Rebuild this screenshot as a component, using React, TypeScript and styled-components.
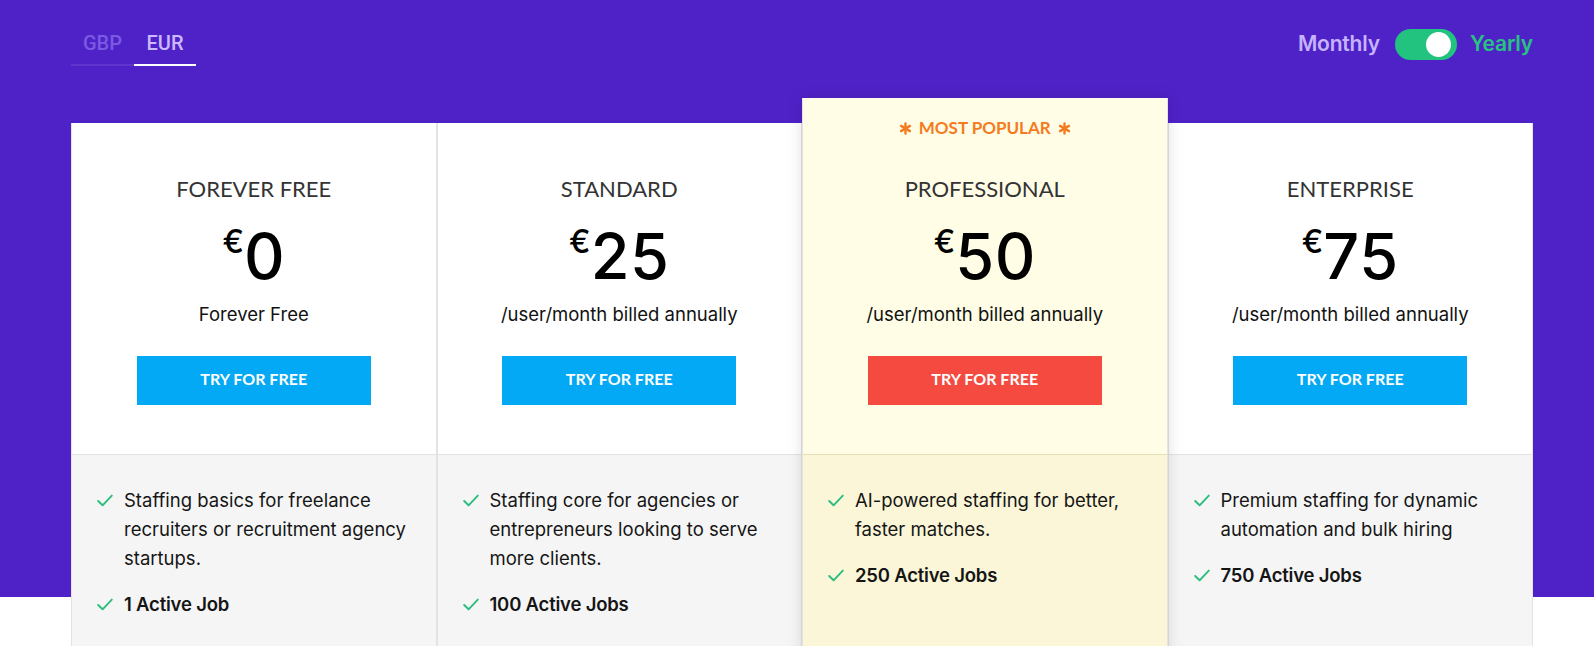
import React from 'react';
import styled, { createGlobalStyle } from 'styled-components';

const GlobalStyle = createGlobalStyle`
    html, body {
        margin: 0;
        padding: 0;
        overflow: hidden;
    }

    body {
        background: #fff;
        font-family: Inter, 'Liberation Sans', sans-serif;
    }

    * {
        box-sizing: border-box;
    }
`;

const Page = styled.div`
    background: linear-gradient(to bottom, #4f22c8 0, #4f22c8 597px, #fff 597px);
    height: 646px;
    overflow: hidden;
`;

const Container = styled.div`
    margin-left: 71px;
    width: 1462px;
`;

const Header = styled.div`
    align-items: flex-start;
    display: flex;
    height: 98px;
    justify-content: space-between;
    padding-top: 29px;
`;

const Tabs = styled.div`
    display: flex;
    margin-top: 2px;
`;

const Tab = styled.div<{ $active?: boolean }>`
    border-bottom: 2px solid ${props => (props.$active ? '#fff' : 'rgba(255, 255, 255, 0.09)')};
    color: ${props => (props.$active ? '#cdb9ff' : '#7a5ae2')};
    font-family: Roboto, 'Liberation Sans', sans-serif;
    font-size: 20px;
    font-weight: 500;
    line-height: 24px;
    padding-bottom: 9px;
    text-align: center;
    width: ${props => (props.$active ? '62px' : '63px')};
`;

const BillingSwitch = styled.div`
    align-items: center;
    display: flex;
    height: 31px;
`;

const BillingLabel = styled.span<{ $on?: boolean }>`
    color: ${props => (props.$on ? '#27c47f' : '#c6b3ff')};
    font-size: 21px;
    font-weight: 600;
    letter-spacing: -0.2px;
    line-height: 24px;
    margin-bottom: 1px;
`;

const Switch = styled.div`
    background: #22c27f;
    border-radius: 16px;
    display: flex;
    height: 31px;
    justify-content: flex-end;
    margin: 0 13px 0 15px;
    padding: 3px 6px 3px 0;
    width: 62px;
`;

const Knob = styled.div`
    background: #fff;
    border-radius: 50%;
    height: 25px;
    width: 25px;
`;

const Grid = styled.div`
    align-items: start;
    display: grid;
    grid-template-columns: repeat(4, 1fr);
`;

const Card = styled.div<{ $popular?: boolean }>`
    border-left: 1px solid #e3e3e3;
    border-right: 1px solid #e3e3e3;
    box-shadow: ${props => (props.$popular ? '0 0 14px rgba(0, 0, 0, 0.13)' : 'none')};
    margin-top: ${props => (props.$popular ? '0' : '25px')};
    position: relative;
    z-index: ${props => (props.$popular ? 1 : 0)};
`;

const Top = styled.div<{ $popular?: boolean }>`
    align-items: center;
    background: ${props => (props.$popular ? '#fffde6' : '#fff')};
    display: flex;
    flex-direction: column;
    height: ${props => (props.$popular ? '356px' : '331px')};
    padding-top: ${props => (props.$popular ? '20px' : '52px')};
`;

const Popular = styled.div`
    align-items: center;
    color: #f47b20;
    display: flex;
    font-family: Lato, 'Liberation Sans', sans-serif;
    font-size: 17px;
    font-weight: 700;
    gap: 7px;
    height: 20px;
    line-height: 20px;
    margin-bottom: 37px;
`;

const Star = styled.svg`
    display: block;
`;

const Title = styled.h3`
    color: #333;
    font-family: Lato, 'Liberation Sans', sans-serif;
    font-size: 22px;
    font-weight: 400;
    line-height: 26px;
    margin: 1px 0 0;
`;

const Price = styled.div`
    align-items: flex-start;
    color: #000;
    display: flex;
    height: 62px;
    margin-top: 23px;
`;

const Currency = styled.span`
    font-size: 32px;
    font-weight: 500;
    line-height: 30px;
    margin: 2px 0 0;
`;

const Amount = styled.span`
    font-size: 63px;
    font-weight: 500;
    letter-spacing: 0.5px;
    line-height: 62px;
`;

const Note = styled.p`
    color: #111;
    font-size: 18.5px;
    line-height: 22px;
    margin: 16px 0 0;
`;

const TryButton = styled.button<{ $popular?: boolean }>`
    background: ${props => (props.$popular ? '#f44a3f' : '#03a9f4')};
    border: 0;
    color: #fff;
    cursor: pointer;
    font-family: Lato, 'Liberation Sans', sans-serif;
    font-size: 16px;
    font-weight: 700;
    height: 49px;
    margin-top: 31px;
    padding: 0 0 5px;
    width: 234px;
`;

const Features = styled.ul<{ $popular?: boolean }>`
    background: ${props => (props.$popular ? '#faf6d7' : '#f5f5f5')};
    border-top: 1px solid ${props => (props.$popular ? '#e6e0b6' : '#e3e3e3')};
    list-style: none;
    margin: 0;
    min-height: 260px;
    padding: 31px 22px 0 25px;
`;

const Feature = styled.li<{ $strong?: boolean }>`
    color: #151515;
    display: flex;
    font-size: 18.5px;
    font-weight: ${props => (props.$strong ? 600 : 400)};
    letter-spacing: ${props => (props.$strong ? '-0.2px' : '0')};
    line-height: 29px;
    margin-bottom: 17px;
`;

const CheckBox = styled.span`
    align-items: center;
    display: flex;
    flex: 0 0 27px;
    height: 29px;
`;

const Check = () => (
    <svg width="16" height="13" viewBox="0 0 16 13" fill="none">
        <path d="M1.2 7 L5.6 11.3 L14.8 1.6" stroke="#2bbd7e" strokeWidth="1.9" strokeLinecap="round" strokeLinejoin="round" />
    </svg>
);

const Asterisk = () => (
    <Star width="13" height="13" viewBox="0 0 14 14">
        <g stroke="#f47b20" strokeWidth="2.6" strokeLinecap="round">
            <line x1="7" y1="1.5" x2="7" y2="12.5" />
            <line x1="2.2" y1="4.2" x2="11.8" y2="9.8" />
            <line x1="2.2" y1="9.8" x2="11.8" y2="4.2" />
        </g>
    </Star>
);

interface Plan {
    name: string;
    price: string;
    note: string;
    desc: string;
    jobs: string;
    popular?: boolean;
}

const PLANS: Plan[] = [
    {
        name: 'FOREVER FREE',
        price: '0',
        note: 'Forever Free',
        desc: 'Staffing basics for freelance recruiters or recruitment agency startups.',
        jobs: '1 Active Job',
    },
    {
        name: 'STANDARD',
        price: '25',
        note: '/user/month billed annually',
        desc: 'Staffing core for agencies or entrepreneurs looking to serve more clients.',
        jobs: '100 Active Jobs',
    },
    {
        name: 'PROFESSIONAL',
        price: '50',
        note: '/user/month billed annually',
        desc: 'AI-powered staffing for better, faster matches.',
        jobs: '250 Active Jobs',
        popular: true,
    },
    {
        name: 'ENTERPRISE',
        price: '75',
        note: '/user/month billed annually',
        desc: 'Premium staffing for dynamic automation and bulk hiring',
        jobs: '750 Active Jobs',
    },
];

const PlanCard = ({ plan }: { plan: Plan }) => (
    <Card $popular={plan.popular}>
        <Top $popular={plan.popular}>
            {plan.popular && (
                <Popular>
                    <Asterisk />
                    MOST POPULAR
                    <Asterisk />
                </Popular>
            )}
            <Title>{plan.name}</Title>
            <Price>
                <Currency>€</Currency>
                <Amount>{plan.price}</Amount>
            </Price>
            <Note>{plan.note}</Note>
            <TryButton $popular={plan.popular}>TRY FOR FREE</TryButton>
        </Top>
        <Features $popular={plan.popular}>
            <Feature>
                <CheckBox>
                    <Check />
                </CheckBox>
                <span>{plan.desc}</span>
            </Feature>
            <Feature $strong>
                <CheckBox>
                    <Check />
                </CheckBox>
                <span>{plan.jobs}</span>
            </Feature>
        </Features>
    </Card>
);

export default function App() {
    return (
        <Page>
            <GlobalStyle />
            <Container>
                <Header>
                    <Tabs>
                        <Tab>GBP</Tab>
                        <Tab $active>EUR</Tab>
                    </Tabs>
                    <BillingSwitch>
                        <BillingLabel>Monthly</BillingLabel>
                        <Switch>
                            <Knob />
                        </Switch>
                        <BillingLabel $on>Yearly</BillingLabel>
                    </BillingSwitch>
                </Header>
                <Grid>
                    {PLANS.map(plan => (
                        <PlanCard key={plan.name} plan={plan} />
                    ))}
                </Grid>
            </Container>
        </Page>
    );
}
